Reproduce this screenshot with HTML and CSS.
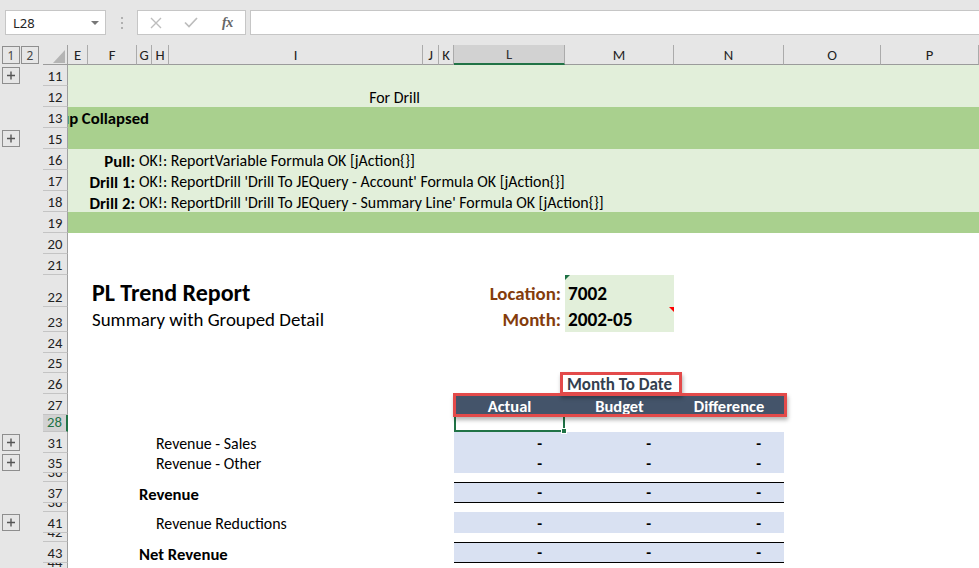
FILE: index.html
```html
<!DOCTYPE html>
<html>
<head>
<meta charset="utf-8">
<link rel="stylesheet" href="styles.css">
</head>
<body>
<div class="app">
  <div class="toolbar">
    <div class="namebox"><span>L28</span><span class="caret"></span></div>
    <div class="dots"><span></span><span></span><span></span></div>
    <div class="fxbox">
      <svg class="ic-x" width="12" height="12" viewBox="0 0 12 12"><path d="M1 1L11 11M11 1L1 11" stroke="#bdbdbd" stroke-width="1.4" fill="none"/></svg>
      <svg class="ic-ok" width="14" height="11" viewBox="0 0 14 11"><path d="M1 5.5L5 9.5L13 1" stroke="#bdbdbd" stroke-width="1.7" fill="none"/></svg>
      <span class="fx">fx</span>
    </div>
    <div class="input"></div>
  </div>

  <div class="sheet">
    <div class="row hdr">
      <div class="ol lvls"><span class="lv">1</span><span class="lv">2</span></div>
      <div class="rh corner"><svg width="12" height="13" viewBox="0 0 12 13"><polygon points="12,0 12,13 0,13" fill="#b4b4b4"/></svg></div>
      <div class="chd">E</div>
      <div class="chd">F</div>
      <div class="chd">G</div>
      <div class="chd">H</div>
      <div class="chd">I</div>
      <div class="chd">J</div>
      <div class="chd">K</div>
      <div class="chd csel">L</div>
      <div class="chd">M</div>
      <div class="chd">N</div>
      <div class="chd">O</div>
      <div class="chd">P</div>
    </div>

    <div class="row lg">
      <div class="ol"><span class="plus"><svg width="16" height="15" viewBox="0 0 16 15"><path d="M4 7.5H12M8 3.5V11.5" stroke="#555" stroke-width="1.4"/></svg></span></div>
      <div class="rh">11</div>
    </div>
    <div class="row lg">
      <div class="ol"></div>
      <div class="rh">12</div>
      <div class="c col-i right pr3">For Drill</div>
    </div>
    <div class="row dg">
      <div class="ol"></div>
      <div class="rh">13</div>
      <div class="c span-eh right clip pb1"><b>up Collapsed</b></div>
    </div>
    <div class="row dg">
      <div class="ol"><span class="plus"><svg width="16" height="15" viewBox="0 0 16 15"><path d="M4 7.5H12M8 3.5V11.5" stroke="#555" stroke-width="1.4"/></svg></span></div>
      <div class="rh">15</div>
    </div>
    <div class="row lg">
      <div class="ol"></div>
      <div class="rh">16</div>
      <div class="c col-f right"><b>Pull:</b></div>
      <div class="c col-g">OK!: ReportVariable Formula OK [jAction{}]</div>
    </div>
    <div class="row lg">
      <div class="ol"></div>
      <div class="rh">17</div>
      <div class="c col-f right"><b>Drill 1:</b></div>
      <div class="c col-g">OK!: ReportDrill 'Drill To JEQuery - Account' Formula OK [jAction{}]</div>
    </div>
    <div class="row lg">
      <div class="ol"></div>
      <div class="rh">18</div>
      <div class="c col-f right"><b>Drill 2:</b></div>
      <div class="c col-g">OK!: ReportDrill 'Drill To JEQuery - Summary Line' Formula OK [jAction{}]</div>
    </div>
    <div class="row dg">
      <div class="ol"></div>
      <div class="rh">19</div>
    </div>
    <div class="row">
      <div class="ol"></div>
      <div class="rh">20</div>
    </div>
    <div class="row">
      <div class="ol"></div>
      <div class="rh">21</div>
    </div>
    <div class="row h32">
      <div class="ol"></div>
      <div class="rh">22</div>
      <div class="c col-f title">PL Trend Report</div>
      <div class="c col-l right lbl">Location:</div>
      <div class="c col-m val inp ind-green">7002</div>
    </div>
    <div class="row h25">
      <div class="ol"></div>
      <div class="rh">23</div>
      <div class="c col-f sub">Summary with Grouped Detail</div>
      <div class="c col-l right lbl lbl2">Month:</div>
      <div class="c col-m val val2 inp ind-red">2002-05</div>
    </div>
    <div class="row">
      <div class="ol"></div>
      <div class="rh">24</div>
    </div>
    <div class="row h20">
      <div class="ol"></div>
      <div class="rh">25</div>
    </div>
    <div class="row">
      <div class="ol"></div>
      <div class="rh">26</div>
      <div class="c col-m center mtd">Month To Date</div>
    </div>
    <div class="row">
      <div class="ol"></div>
      <div class="rh">27</div>
      <div class="c col-l center th">Actual</div>
      <div class="c col-m center th">Budget</div>
      <div class="c col-n center th">Difference</div>
    </div>
    <div class="row h17">
      <div class="ol"></div>
      <div class="rh rsel">28</div>
      <div class="c col-l selcell"><span class="handle"></span></div>
    </div>
    <div class="row">
      <div class="ol"><span class="plus"><svg width="16" height="15" viewBox="0 0 16 15"><path d="M4 7.5H12M8 3.5V11.5" stroke="#555" stroke-width="1.4"/></svg></span></div>
      <div class="rh">31</div>
      <div class="c col-h ind">Revenue - Sales</div>
      <div class="c col-l num">-</div>
      <div class="c col-m num">-</div>
      <div class="c col-n num">-</div>
    </div>
    <div class="row h20">
      <div class="ol"><span class="plus"><svg width="16" height="15" viewBox="0 0 16 15"><path d="M4 7.5H12M8 3.5V11.5" stroke="#555" stroke-width="1.4"/></svg></span></div>
      <div class="rh">35</div>
      <div class="c col-h ind">Revenue - Other</div>
      <div class="c col-l num">-</div>
      <div class="c col-m num">-</div>
      <div class="c col-n num">-</div>
    </div>
    <div class="row h9">
      <div class="ol"></div>
      <div class="rh">36</div>
    </div>
    <div class="row">
      <div class="ol"></div>
      <div class="rh">37</div>
      <div class="c col-g"><b>Revenue</b></div>
      <div class="c col-l num rule">-</div>
      <div class="c col-m num rule">-</div>
      <div class="c col-n num rule">-</div>
    </div>
    <div class="row h9">
      <div class="ol"></div>
      <div class="rh">38</div>
    </div>
    <div class="row">
      <div class="ol"><span class="plus"><svg width="16" height="15" viewBox="0 0 16 15"><path d="M4 7.5H12M8 3.5V11.5" stroke="#555" stroke-width="1.4"/></svg></span></div>
      <div class="rh">41</div>
      <div class="c col-h ind">Revenue Reductions</div>
      <div class="c col-l num">-</div>
      <div class="c col-m num">-</div>
      <div class="c col-n num">-</div>
    </div>
    <div class="row h9">
      <div class="ol"></div>
      <div class="rh">42</div>
    </div>
    <div class="row">
      <div class="ol"></div>
      <div class="rh">43</div>
      <div class="c col-g"><b>Net Revenue</b></div>
      <div class="c col-l num rule">-</div>
      <div class="c col-m num rule">-</div>
      <div class="c col-n num rule">-</div>
    </div>
    <div class="row h9">
      <div class="ol"></div>
      <div class="rh">44</div>
    </div>
  </div>

  <div class="mark mark-mtd"></div>
  <div class="mark mark-hdr"></div>
</div>
</body>
</html>
```

FILE: styles.css
```css
* { box-sizing: border-box; }

html, body {
  margin: 0;
  padding: 0;
  background: #ffffff;
}

body {
  font-family: Carlito, Calibri, Lato, "Liberation Sans", sans-serif;
  font-size: 15.9px;
  color: #000;
}

b { font-size: 1.05em; }

.app {
  position: relative;
  width: 979px;
  height: 568px;
  overflow: hidden;
  background: #fff;
}

/* ---------- formula bar ---------- */
.toolbar {
  height: 45px;
  background: #e6e6e6;
  display: flex;
  align-items: flex-start;
  padding: 10px 0 0 5px;
}

.namebox {
  width: 101px;
  height: 25px;
  background: #fff;
  border: 1px solid #c6c6c6;
  display: flex;
  align-items: center;
  justify-content: space-between;
  padding: 0 6px 0 7px;
  font-family: "Noto Sans", "Open Sans", sans-serif;
  font-size: 13px;
  color: #222;
}

.caret {
  width: 0;
  height: 0;
  border-left: 4px solid transparent;
  border-right: 4px solid transparent;
  border-top: 4px solid #777;
}

.dots {
  width: 31px;
  height: 25px;
  display: flex;
  flex-direction: column;
  align-items: center;
  justify-content: center;
  gap: 3px;
}

.dots span {
  width: 2px;
  height: 2px;
  background: #b0b0b0;
}

.fxbox {
  width: 109px;
  height: 25px;
  background: #fff;
  border: 1px solid #c6c6c6;
  display: flex;
  align-items: center;
  padding-left: 12px;
}

.ic-ok { margin-left: 22px; }

.fx {
  margin-left: 24px;
  font-family: "Liberation Serif", serif;
  font-style: italic;
  font-weight: bold;
  font-size: 14px;
  color: #666;
  letter-spacing: -0.5px;
}

.input {
  flex: 1;
  margin-left: 4px;
  margin-right: -2px;
  height: 25px;
  background: #fff;
  border: 1px solid #c6c6c6;
}

/* ---------- sheet grid ---------- */
.row {
  display: grid;
  grid-template-columns:
    [ol] 43px [rh] 25px [e] 20px [f] 49px [g] 15px [h] 17px [i] 254px
    [j] 16px [k] 15px [l] 111px [m] 109px [n] 110px [o] 97px [p] 98px [end];
  grid-template-rows: minmax(0, 1fr);
  height: 21px;
}

.row > * { grid-row: 1; min-height: 0; }

.h32 { height: 32px; }
.h25 { height: 25px; }
.h20 { height: 20px; }
.h17 { height: 17px; }
.h9 { height: 9px; }

.lg { background: #e2efda; }
.dg { background: #a9d08e; }

.ol {
  grid-column: ol;
  background: #e6e6e6;
  display: flex;
  align-items: flex-end;
  padding: 0 0 2px 2px;
}

.plus {
  width: 18px;
  height: 17px;
  border: 1px solid #8e8e8e;
  display: flex;
  align-items: center;
  justify-content: center;
}

.rh {
  grid-column: rh;
  background: #e6e6e6;
  border-bottom: 1px solid #c4c4c4;
  border-right: 1px solid #a0a0a0;
  display: flex;
  align-items: flex-end;
  justify-content: center;
  padding-bottom: 0;
  font-size: 14.67px;
  line-height: 17px;
  color: #222;
  overflow: hidden;
}

.rsel {
  background: #d2d2d2;
  border-right: 2px solid #217346;
  color: #217346;
}

/* header row */
.hdr {
  height: 20px;
  background: #e6e6e6;
  font-size: 14.67px;
}

.lvls {
  align-items: stretch;
  padding: 1px 0 1px 2px;
  gap: 1px;
}

.lv {
  width: 18px;
  border: 1px solid #8e8e8e;
  display: flex;
  align-items: center;
  justify-content: center;
  font-family: "Noto Sans", "Open Sans", sans-serif;
  font-size: 12px;
  color: #444;
}

.corner {
  border-bottom: 1px solid #9b9b9b;
  border-right: 1px solid #a0a0a0;
  align-items: flex-end;
  justify-content: flex-end;
  padding: 0 2px 1px 0;
}

.chd {
  border-right: 1px solid #ababab;
  border-bottom: 1px solid #9b9b9b;
  display: flex;
  align-items: center;
  justify-content: center;
  color: #222;
  line-height: 17px;
  padding-top: 1px;
}

.csel {
  background: #d2d2d2;
  border-bottom: 2px solid #217346;
  color: #333;
}

/* cells */
.c {
  display: flex;
  align-items: flex-end;
  white-space: nowrap;
  padding: 0 2px 0;
  line-height: 18px;
}

.right { justify-content: flex-end; }
.center { justify-content: center; }
.pr3 { padding-right: 3px; }
.pb1 { padding-bottom: 1px; }

.col-e { grid-column: e; }
.col-f { grid-column: f; }
.col-g { grid-column: g; }
.col-h { grid-column: h; }
.col-i { grid-column: i; }
.col-l { grid-column: l; }
.col-m { grid-column: m; }
.col-n { grid-column: n; }
.span-eh { grid-column: e / h; }

.clip { overflow: hidden; padding-right: 3px; }

.title {
  font-size: 24px;
  font-weight: bold;
  line-height: 27px;
  padding: 0 0 1px 4px;
}

.sub {
  font-size: 18.9px;
  line-height: 22px;
  padding: 0 0 1px 4px;
}

.lbl {
  font-size: 18.9px;
  font-weight: bold;
  color: #843c0c;
  line-height: 22px;
  padding: 0 4px 2px 0;
}

.val {
  font-size: 19.3px;
  font-weight: bold;
  line-height: 22px;
  padding: 0 0 2px 3px;
}

.lbl2, .val2 { padding-bottom: 1px; }

.inp {
  background: #e2efda;
  position: relative;
}

.ind-green::before {
  content: "";
  position: absolute;
  left: 0;
  top: 0;
  border-top: 5px solid #1d7044;
  border-right: 5px solid transparent;
}

.ind-red::before {
  content: "";
  position: absolute;
  right: 0;
  top: 0;
  border-top: 5px solid #ff0000;
  border-left: 5px solid transparent;
}

.mtd {
  font-size: 17px;
  font-weight: bold;
  color: #333f4f;
}

.th {
  background: #44546a;
  color: #fff;
  font-size: 16.5px;
  font-weight: bold;
}

.selcell {
  border: 2px solid #217346;
  position: relative;
}

.handle {
  position: absolute;
  right: -4px;
  bottom: -4px;
  width: 6px;
  height: 6px;
  background: #217346;
  border: 1px solid #fff;
}

.ind { padding-left: 4px; }

.num {
  background: #d9e1f2;
  justify-content: flex-end;
  padding-right: 23px;
  font-weight: bold;
}

.rule {
  border-top: 1px solid #000;
  border-bottom: 1px solid #000;
}

/* red annotation boxes drawn over the sheet */
.mark {
  position: absolute;
  border: 3px solid #e34a4a;
  box-shadow: 1px 3px 4px rgba(0, 0, 0, 0.3);
}

.mark-mtd {
  left: 560px;
  top: 372px;
  width: 122px;
  height: 23px;
}

.mark-hdr {
  left: 453px;
  top: 393px;
  width: 334px;
  height: 24px;
}
```
